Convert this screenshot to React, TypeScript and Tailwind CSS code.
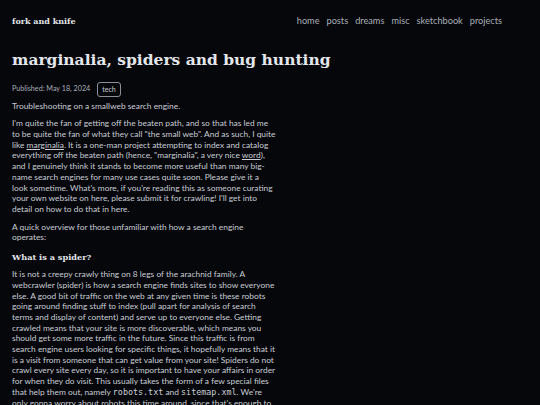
const nav = ['home', 'posts', 'dreams', 'misc', 'sketchbook', 'projects'];

const sans = "font-['Lato',sans-serif]";
const serif = "font-['DejaVu_Serif',serif]";

export default function App() {
  return (
    <div className={`min-h-[405px] bg-[#05070b] text-[#c9cdd3] ${sans}`}>
      <header className="flex items-center justify-between px-3 pt-[14px]">
        <a className={`${serif} text-[8px] font-bold text-[#e3e6ea]`}>fork and knife</a>
        <nav className="mr-[26px] flex gap-[7px] text-[9.2px] text-[#a9aeb6]">
          {nav.map((n) => (
            <a key={n}>{n}</a>
          ))}
        </nav>
      </header>

      <main className="px-3 pt-[22px]">
        <h1 className={`${serif} text-[15.5px] font-bold leading-tight text-[#e3e6ea]`}>
          marginalia, spiders and bug hunting
        </h1>

        <div className="mt-[13px] flex items-center gap-[7px] text-[7.2px] text-[#a9aeb6]">
          <span>Published: May 18, 2024</span>
          <span className="rounded-[3px] border border-[#8a9099] px-[4px] py-[1px] text-[7px] text-[#c9cdd3]">
            tech
          </span>
        </div>

        <article className="mt-[4px] max-w-[264px] text-[8.4px] leading-[10.7px]">
          <p className="mb-[7px]">Troubleshooting on a smallweb search engine.</p>
          <p className="mb-[7px]">
            I'm quite the fan of getting off the beaten path, and so that has led me to be quite
            the fan of what they call "the small web". And as such, I quite like{' '}
            <a className="underline">marginalia</a>. It is a one-man project attempting to index
            and catalog everything off the beaten path (hence, "marginalia", a very nice{' '}
            <a className="underline">word</a>), and I genuinely think it stands to become more
            useful than many big-name search engines for many use cases quite soon. Please give it
            a look sometime. What's more, if you're reading this as someone curating your own
            website on here, please submit it for crawling! I'll get into detail on how to do that
            in here.
          </p>
          <p className="mb-[7px]">
            A quick overview for those unfamiliar with how a search engine operates:
          </p>
          <h2 className={`${serif} mb-[5px] text-[8.2px] font-bold leading-[14px] text-[#e3e6ea]`}>
            What is a spider?
          </h2>
          <p>
            It is not a creepy crawly thing on 8 legs of the arachnid family. A webcrawler
            (spider) is how a search engine finds sites to show everyone else. A good bit of
            traffic on the web at any given time is these robots going around finding stuff to
            index (pull apart for analysis of search terms and display of content) and serve up to
            everyone else. Getting crawled means that your site is more discoverable, which means
            you should get some more traffic in the future. Since this traffic is from search
            engine users looking for specific things, it hopefully means that it is a visit from
            someone that can get value from your site! Spiders do not crawl every site every day,
            so it is important to have your affairs in order for when they do visit. This usually
            takes the form of a few special files that help them out, namely{' '}
            <code className="font-['DejaVu_Sans_Mono',monospace]">robots.txt</code> and{' '}
            <code className="font-['DejaVu_Sans_Mono',monospace]">sitemap.xml</code>. We're only
            gonna worry about robots this time around, since that's enough to at least get started.
          </p>
        </article>
      </main>
    </div>
  );
}
